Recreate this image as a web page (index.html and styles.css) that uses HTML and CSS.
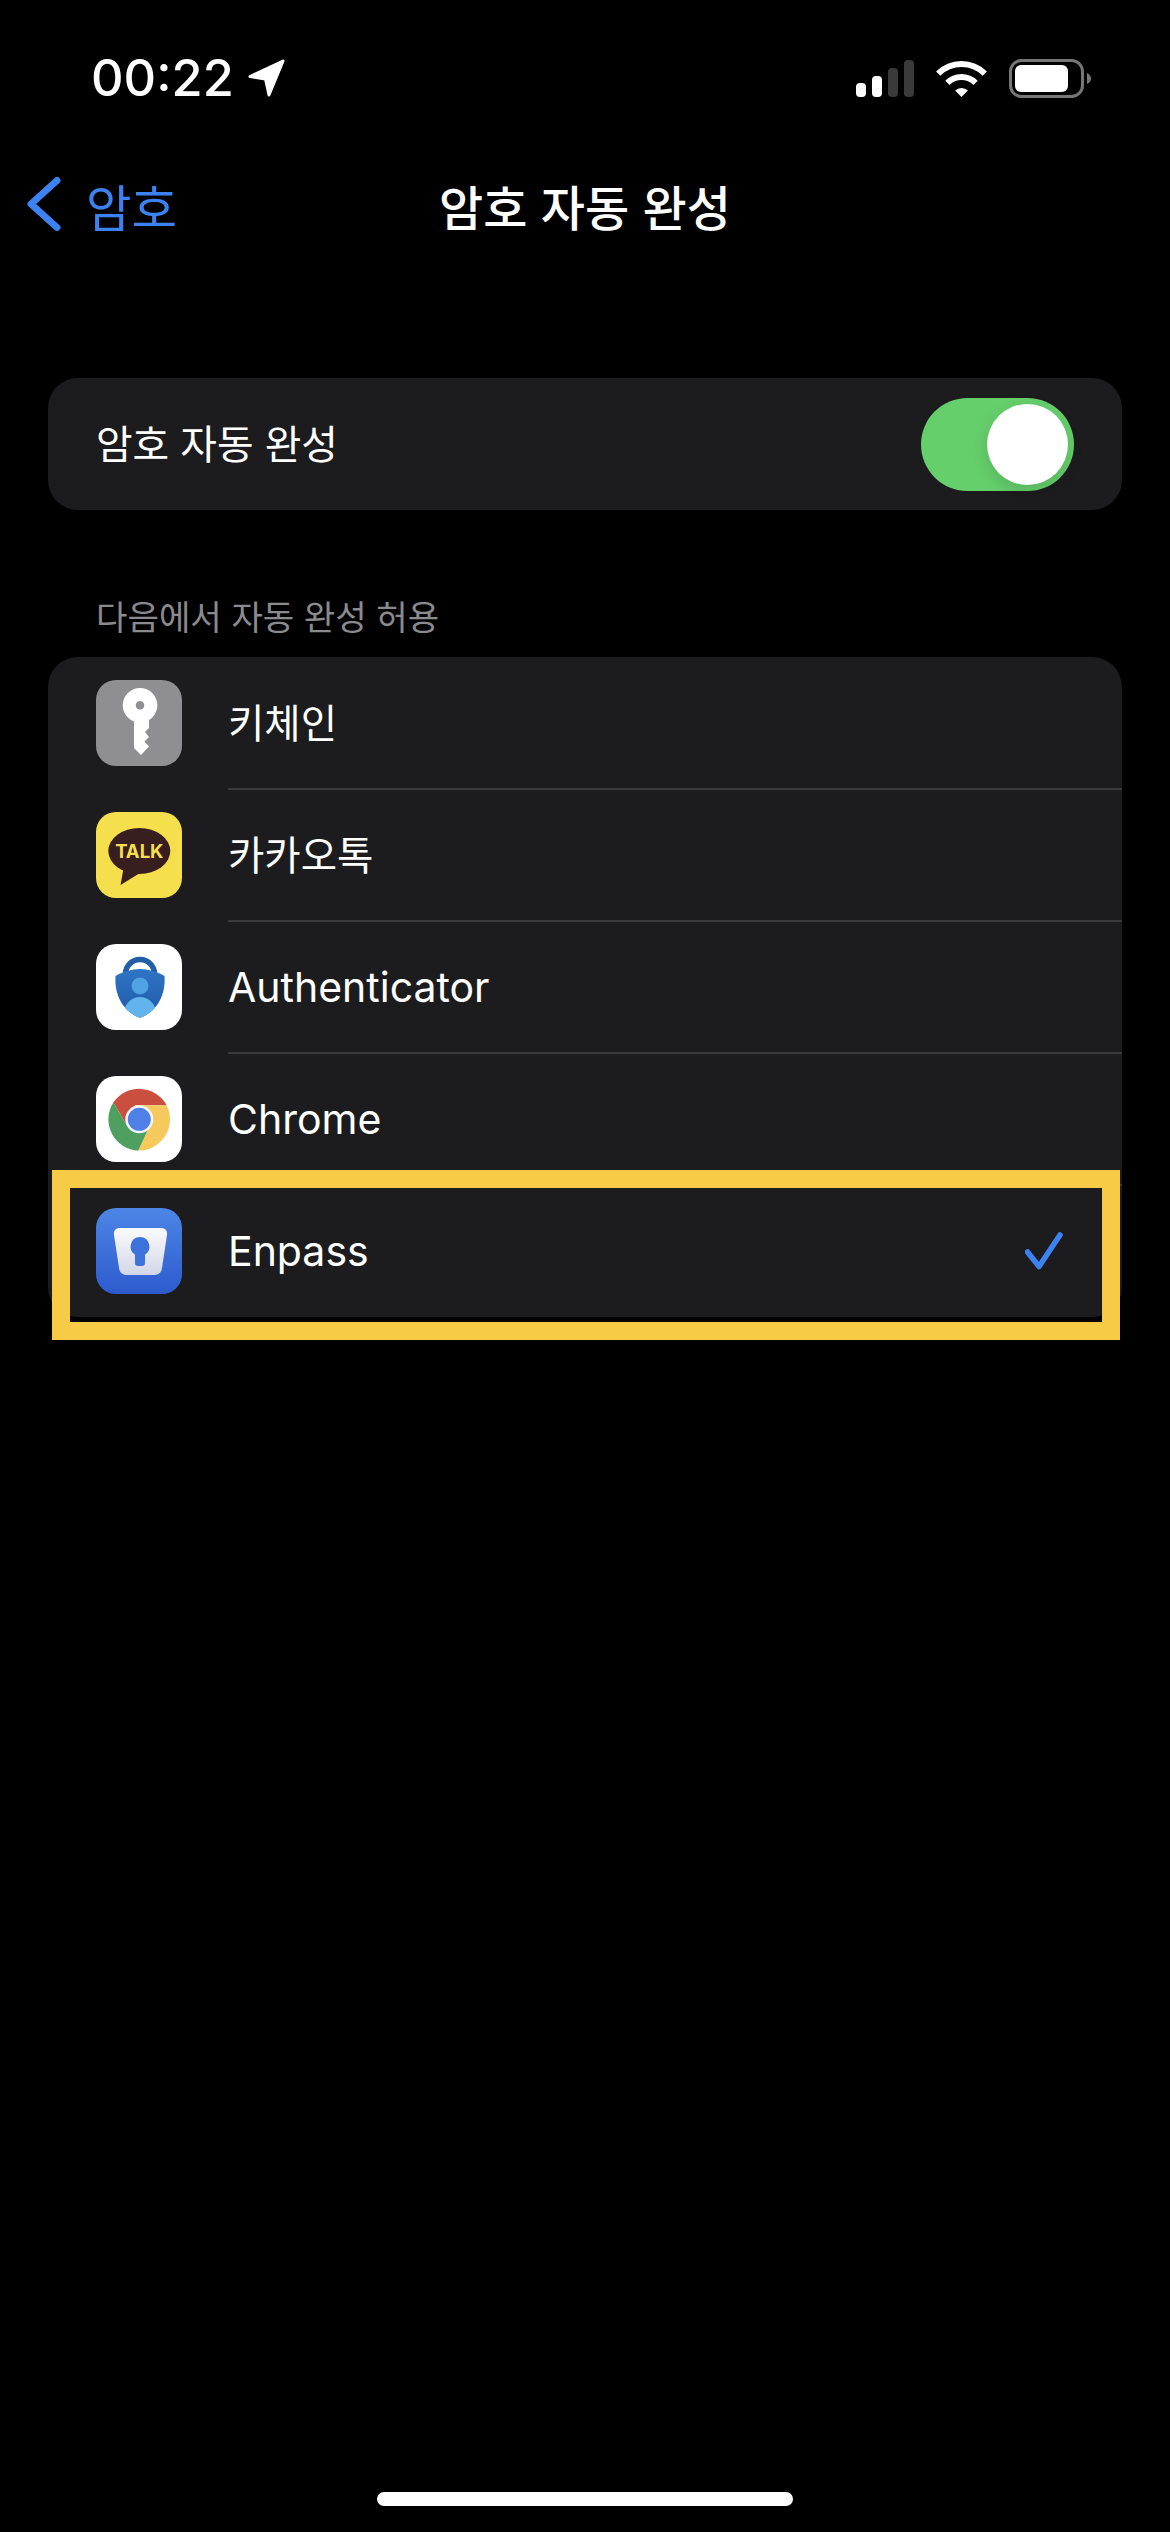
FILE: index.html
```html
<!DOCTYPE html>
<html lang="ko">
<head>
<meta charset="utf-8">
<title>암호 자동 완성</title>
<link rel="stylesheet" href="styles.css">
</head>
<body>
<div class="screen">
  <header class="status-bar">
    <div class="status-left">
      <span class="time">00:22</span>
      <svg class="loc" width="40" height="40" viewBox="0 0 40 40"><path d="M36 3 L3 18.5 L18.5 21 L22 37 Z" fill="#fff" stroke="#fff" stroke-width="3" stroke-linejoin="round"/></svg>
    </div>
    <div class="status-right">
      <svg width="58" height="37" viewBox="0 0 58 37"><rect x="0" y="23" width="10" height="14" rx="4" fill="#fff"/><rect x="16" y="16" width="10" height="21" rx="4" fill="#fff"/><rect x="32" y="8" width="10" height="29" rx="4" fill="#3a3a3a"/><rect x="48" y="0" width="10" height="37" rx="4" fill="#3a3a3a"/></svg>
      <svg width="51" height="37" viewBox="0 0 51 37"><path d="M2.2 13.7 A33 33 0 0 1 48.8 13.7 M11.4 22.9 A20 20 0 0 1 39.6 22.9" fill="none" stroke="#fff" stroke-width="6"/><path d="M25.5 37 L19.1 30.6 A9 9 0 0 1 31.9 30.6 Z" fill="#fff"/></svg>
      <svg width="82" height="39" viewBox="0 0 82 39"><rect x="1.5" y="1.5" width="72" height="36" rx="11" fill="none" stroke="#767676" stroke-width="3"/><rect x="6" y="6" width="53" height="27" rx="6" fill="#fff"/><path d="M78 14 Q82 16 82 19.5 Q82 23 78 25 Z" fill="#767676"/></svg>
    </div>
  </header>

  <nav class="nav">
    <a class="back">
      <svg width="34" height="56" viewBox="0 0 34 56"><path d="M30 3.5 L4 27 L30 50.5" fill="none" stroke="#3d82f1" stroke-width="7" stroke-linecap="round" stroke-linejoin="round"/></svg>
      <span>암호</span>
    </a>
    <h1 class="title">암호 자동 완성</h1>
    <span></span>
  </nav>

  <main class="content">
    <section class="card toggle-row">
      <span class="toggle-label">암호 자동 완성</span>
      <span class="switch"><span class="knob"></span></span>
    </section>

    <h2 class="section-label">다음에서 자동 완성 허용</h2>

    <section class="card list">
      <div class="row">
        <span class="icon icon-key">
          <svg width="86" height="86" viewBox="0 0 86 86"><path fill-rule="evenodd" d="M38 41.5 A17.3 17.3 0 1 1 53 40.1 V48 L49 52 L53 57 L48.5 61.5 L53 66.5 L45 75 L38 68 Z M44 21 a4.3 4.3 0 1 0 0.01 0 Z" fill="#fff"/></svg>
        </span>
        <span class="row-text ko">키체인</span>
      </div>
      <div class="row">
        <span class="icon icon-kakao">
          <svg width="86" height="86" viewBox="0 0 86 86"><ellipse cx="43.3" cy="39" rx="31" ry="23" fill="#381e1f"/><path d="M28 54 L24.5 73 L44 61 Z" fill="#381e1f"/><text x="43.3" y="45.5" text-anchor="middle" class="talk">TALK</text></svg>
        </span>
        <span class="row-text ko">카카오톡</span>
      </div>
      <div class="row">
        <span class="icon icon-white">
          <svg width="86" height="86" viewBox="0 0 86 86"><defs><clipPath id="shield"><path d="M44 25 C52 25 62 28 68.5 32 C70 52 60 68 44 74 C28 68 18 52 19.5 32 C26 28 36 25 44 25 Z"/></clipPath><linearGradient id="shieldFill" x1="0" y1="0" x2="0" y2="1"><stop offset="0" stop-color="#2f74c4"/><stop offset="1" stop-color="#1f5aa8"/></linearGradient></defs><path d="M29.5 32 V30 A14.5 14.5 0 0 1 58.5 30 V32" fill="none" stroke="#235ea8" stroke-width="5.5"/><path d="M44 25 C52 25 62 28 68.5 32 C70 52 60 68 44 74 C28 68 18 52 19.5 32 C26 28 36 25 44 25 Z" fill="url(#shieldFill)"/><g clip-path="url(#shield)"><ellipse cx="44" cy="69" rx="16" ry="16" fill="#62b4ee"/></g><circle cx="44" cy="42" r="8.5" fill="#4fa3e3"/></svg>
        </span>
        <span class="row-text">Authenticator</span>
      </div>
      <div class="row">
        <span class="icon icon-white">
          <svg width="86" height="86" viewBox="0 0 86 86"><path d="M39 29.3 L70.7 29.3 A31.3 31.3 0 0 0 17.3 26.5 L30.7 49 Z" fill="#cb4f3e"/><path d="M39 29.3 L70.7 29.3 A31.3 31.3 0 0 1 42.3 74.6 L52.3 53 Z" fill="#f5c95c"/><path d="M17.3 26.5 A31.3 31.3 0 0 0 42.3 74.6 L52.3 53 L30.7 49 Z" fill="#4f9f60"/><circle cx="43.3" cy="43.3" r="14" fill="#f3f4f7"/><circle cx="43.3" cy="43.3" r="11.5" fill="#4f80e8"/></svg>
        </span>
        <span class="row-text">Chrome</span>
      </div>
      <div class="row">
        <span class="icon icon-enpass">
          <svg width="86" height="86" viewBox="0 0 86 86"><defs><linearGradient id="enpassLock" x1="0" y1="0" x2="0" y2="1"><stop offset="0" stop-color="#fbfbfd"/><stop offset="1" stop-color="#d3d6e8"/></linearGradient></defs><path d="M24 20 H65 C69 20 71.5 22.5 71 27 L66 60 C65.5 64.5 62.5 67 58 67 H31 C26.5 67 23.5 64.5 23 60 L18 27 C17.5 22.5 20 20 24 20 Z" fill="url(#enpassLock)"/><path d="M44 29 A9.5 9.5 0 0 1 49 46.5 V55 Q49 58 46 58 H42 Q39 58 39 55 V46.5 A9.5 9.5 0 0 1 44 29 Z" fill="#3c72dc"/></svg>
        </span>
        <span class="row-text">Enpass</span>
        <svg class="check" width="38" height="38" viewBox="0 0 38 38"><path d="M2.5 20 L14 34.5 L35 3" fill="none" stroke="#3d82f1" stroke-width="5.5" stroke-linecap="round" stroke-linejoin="round"/></svg>
      </div>
      <div class="highlight"></div>
    </section>
  </main>

  <div class="home-indicator"></div>
</div>
</body>
</html>
```

FILE: styles.css
```css
* { box-sizing: border-box; }
html, body { margin: 0; padding: 0; background: #000; }
body {
  font-family: Inter, "Noto Sans CJK KR", sans-serif;
  color: #fff;
}
.screen {
  width: 1170px;
  height: 2532px;
  display: flex;
  flex-direction: column;
}
.status-bar {
  height: 156px;
  padding: 0 79px 0 91px;
  display: flex;
  align-items: center;
  justify-content: space-between;
}
.status-left { display: flex; align-items: center; gap: 13px; }
.time { font-size: 50.5px; font-weight: 500; line-height: 1; }
.status-right { display: flex; align-items: center; gap: 22px; }
.status-right svg, .status-left svg, .back svg, .check { display: block; }
.nav {
  height: 98px;
  margin-bottom: 2px;
  display: grid;
  grid-template-columns: 1fr auto 1fr;
  align-items: center;
}
.back {
  display: flex;
  align-items: center;
  gap: 25px;
  margin-left: 27px;
  color: #3d82f1;
  font-size: 49.5px;
  font-family: "Noto Sans CJK KR", sans-serif;
}
.title {
  margin: 0;
  font-size: 48px;
  font-weight: 500;
  font-family: "Noto Sans CJK KR", sans-serif;
}
.content {
  margin-top: 122px;
  padding: 0 48px;
}
.card {
  background: #1c1c1e;
  border-radius: 30px;
}
.toggle-row {
  height: 132px;
  padding: 0 48px;
  display: flex;
  align-items: center;
  justify-content: space-between;
}
.toggle-label {
  font-size: 39.8px;
  padding-bottom: 6px;
  font-family: "Noto Sans CJK KR", sans-serif;
}
.row-text {
  flex: 1;
  font-size: 41px;
  font-family: Inter, "Noto Sans CJK KR", sans-serif;
}
.row-text.ko {
  font-size: 39.5px;
  padding-bottom: 6px;
  font-family: "Noto Sans CJK KR", sans-serif;
}
.switch {
  width: 153px;
  height: 93px;
  padding: 6px;
  border-radius: 47px;
  background: #65cf6b;
  display: flex;
  justify-content: flex-end;
}
.knob {
  width: 81px;
  height: 81px;
  border-radius: 50%;
  background: #fff;
  box-shadow: 0 6px 16px rgba(0, 0, 0, 0.14);
}
.section-label {
  margin: 0;
  height: 147px;
  padding: 84px 48px 21px;
  font-size: 34.2px;
  line-height: 42px;
  font-weight: 400;
  color: #8a8a8f;
  font-family: "Noto Sans CJK KR", sans-serif;
}
.list { position: relative; }
.row {
  position: relative;
  height: 132px;
  padding: 0 59px 0 48px;
  display: flex;
  align-items: center;
  gap: 46px;
}
.row + .row::before {
  content: "";
  position: absolute;
  top: -1px;
  left: 180px;
  right: 0;
  height: 1.5px;
  background: #3a3a3c;
}
.icon {
  width: 86px;
  height: 86px;
  border-radius: 20px;
  overflow: hidden;
  display: block;
  flex: none;
}
.icon svg { display: block; }
.icon-key { background: #8e8e93; }
.icon-kakao { background: #f6df4d; }
.icon-white { background: #fff; }
.icon-enpass { background: linear-gradient(#4d86e6, #2d5bcd); }
.talk {
  font-family: Inter, sans-serif;
  font-size: 18.5px;
  font-weight: 700;
  fill: #f6df4d;
}
.highlight {
  position: absolute;
  left: 4px;
  top: 513px;
  width: 1068px;
  height: 170px;
  border: 18px solid #f7cb46;
}
.home-indicator {
  margin: auto auto 26px;
  width: 416px;
  height: 14px;
  border-radius: 7px;
  background: #fff;
}
```
